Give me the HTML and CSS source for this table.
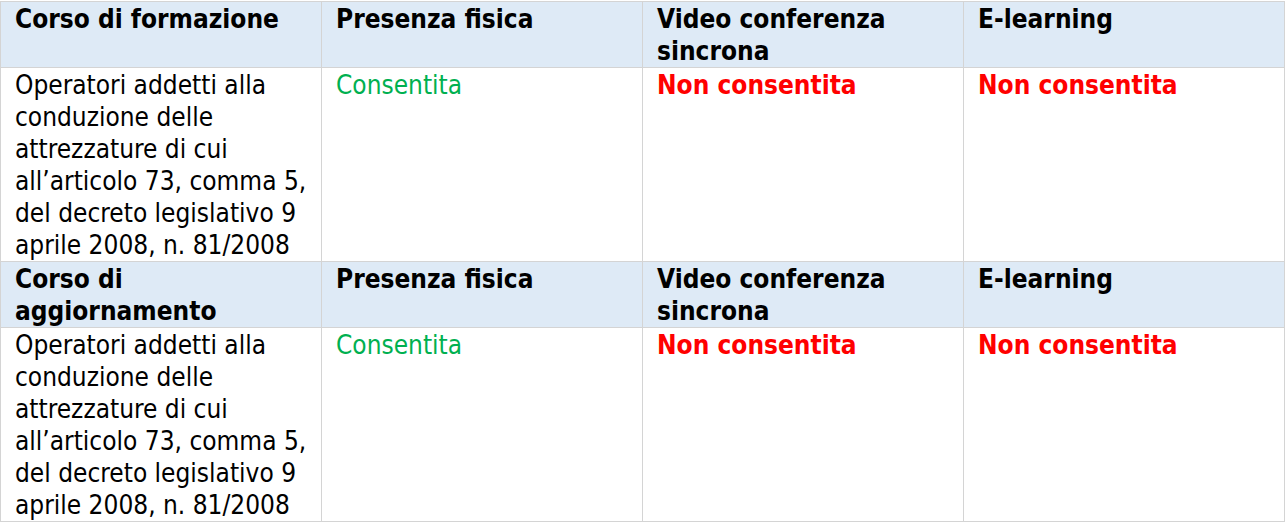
FILE: index.html
```html
<!DOCTYPE html>
<html lang="it">
<head>
<meta charset="utf-8">
<title>Corsi</title>
<link rel="stylesheet" href="styles.css">
</head>
<body>
<div class="wrap">
<table class="grid">
  <colgroup><col class="c"><col class="c"><col class="c"><col class="c"></colgroup>
  <tr class="head">
    <th>Corso di formazione</th>
    <th>Presenza fisica</th>
    <th>Video conferenza sincrona</th>
    <th>E-learning</th>
  </tr>
  <tr class="body">
    <td>Operatori addetti alla conduzione delle attrezzature di cui all’articolo 73, comma 5, del decreto legislativo 9 aprile 2008, n. 81/2008</td>
    <td class="ok">Consentita</td>
    <td class="no">Non consentita</td>
    <td class="no">Non consentita</td>
  </tr>
  <tr class="head">
    <th>Corso di aggiornamento</th>
    <th>Presenza fisica</th>
    <th>Video conferenza sincrona</th>
    <th>E-learning</th>
  </tr>
  <tr class="body">
    <td>Operatori addetti alla conduzione delle attrezzature di cui all’articolo 73, comma 5, del decreto legislativo 9 aprile 2008, n. 81/2008</td>
    <td class="ok">Consentita</td>
    <td class="no">Non consentita</td>
    <td class="no">Non consentita</td>
  </tr>
</table>
<span class="handle"></span>
</div>
</body>
</html>
```
FILE: styles.css
```css
html, body {
  margin: 0;
  padding: 0;
  background: #ffffff;
}
.wrap {
  position: relative;
  width: 1284px;
  padding-top: 1px;
}
.grid {
  border-collapse: collapse;
  table-layout: fixed;
  width: 1284px;
  font-family: "DejaVu Sans Condensed", "DejaVu Sans", sans-serif;
  font-size: 26px;
  line-height: 32px;
  color: #000000;
}
.c { width: 321px; }
.grid th, .grid td {
  border: 1px solid #d4d4d4;
  padding: 1px 8px 0 14px;
  text-align: left;
  vertical-align: top;
}
.head th {
  background: #deeaf6;
  font-weight: bold;
}
.body td { font-weight: normal; }
.grid td.ok { color: #00b050; }
.grid td.no { color: #ff0000; font-weight: bold; }
.handle {
  position: absolute;
  left: 1284px;
  top: 522px;
  width: 3px;
  height: 4px;
  background: #8a8a8a;
}
```
